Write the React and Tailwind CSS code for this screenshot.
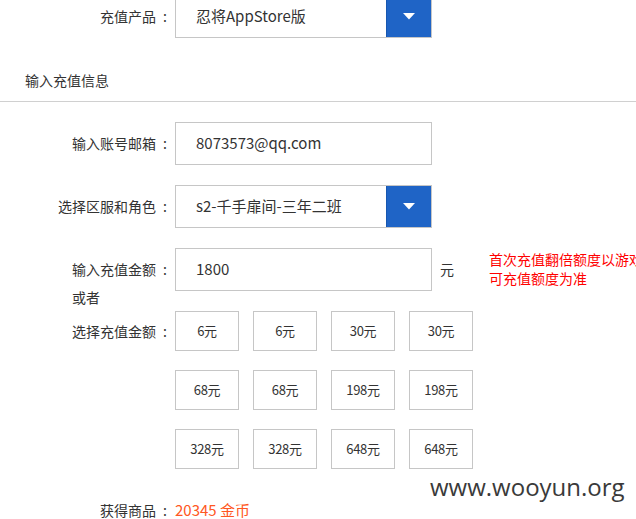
import React from "react";

const font = { fontFamily: '"Noto Sans CJK SC", "Noto Sans", sans-serif' };

const amounts = ["6元", "6元", "30元", "30元", "68元", "68元", "198元", "198元", "328元", "328元", "648元", "648元"];

const Colon = () => <span className="inline-block w-[14px] text-right pr-[3px]">:</span>;

const Label = ({ children, h = "h-[43px]" }) => (
  <div className={`w-[170px] ${h} flex items-center justify-end text-[14px] text-[#333] shrink-0`}>
    {children}
    <Colon />
  </div>
);

const Arrow = () => (
  <div className="w-[45px] h-full bg-[#1f64c6] border-l border-[#1857b0] flex items-center justify-center">
    <svg width="12" height="7" viewBox="0 0 12 7">
      <path d="M0 0 L12 0 L6 6.5 Z" fill="#fff" />
    </svg>
  </div>
);

const SelectBox = ({ value }) => (
  <div className="ml-[5px] w-[257px] h-[43px] border border-[#c6c6c6] flex items-stretch bg-white">
    <div className="flex-1 flex items-center pl-[20px] text-[15px] text-[#333]">{value}</div>
    <Arrow />
  </div>
);

const InputBox = ({ value }) => (
  <div className="ml-[5px] w-[257px] h-[43px] border border-[#c6c6c6] flex items-center pl-[20px] text-[15px] text-[#333] bg-white shrink-0">
    {value}
  </div>
);

export default function App() {
  return (
    <div className="relative w-[636px] h-[519px] overflow-hidden bg-white" style={font}>
      {/* 充值产品 */}
      <div className="flex -mt-[5px]">
        <Label>充值产品</Label>
        <SelectBox value="忍将AppStore版" />
      </div>

      {/* section title */}
      <div className="mt-[32px] pl-[25px] pb-[11px] border-b border-[#d0d0d0] text-[14px] leading-[20px] text-[#333]">
        输入充值信息
      </div>

      <div className="flex mt-[20px]">
        <Label>输入账号邮箱</Label>
        <InputBox value="8073573@qq.com" />
      </div>

      <div className="flex mt-[20px]">
        <Label>选择区服和角色</Label>
        <SelectBox value="s2-千手扉间-三年二班" />
      </div>

      {/* amount */}
      <div className="flex items-start mt-[20px]">
        <Label>输入充值金额</Label>
        <InputBox value="1800" />
        <div className="ml-[8px] h-[43px] flex items-center text-[14px] text-[#333]">元</div>
        <div className="ml-[35px] mt-[2px] text-[14px] leading-[19px] text-[#ff0000] whitespace-nowrap">
          首次充值翻倍额度以游戏
          <br />
          可充值额度为准
        </div>
      </div>
      <div className="pl-[72px] -mt-[4px] text-[14px] leading-[20px] text-[#333]">或者</div>

      {/* choose amount */}
      <div className="flex items-start mt-[4px]">
        <Label h="h-[40px]">选择充值金额</Label>
        <div className="ml-[5px] grid grid-cols-[repeat(4,64px)] gap-x-[14px] gap-y-[19px]">
          {amounts.map((a, i) => (
            <div
              key={i}
              className="h-[40px] border border-[#c6c6c6] flex items-center justify-center text-[13px] text-[#333] tracking-[-0.3px]"
            >
              {a}
            </div>
          ))}
        </div>
      </div>

      {/* result */}
      <div className="flex items-center mt-[31px] leading-[20px]">
        <div className="w-[170px] text-right text-[14px] text-[#333] shrink-0">
          获得商品
          <Colon />
        </div>
        <div className="ml-[5px] text-[15px] text-[#ff5722]">20345 金币</div>
      </div>

      {/* watermark */}
      <div
        className="absolute left-[430px] top-[472px] text-[24px] leading-[30px] text-[#3a3a3a]"
        style={{ fontFamily: '"Open Sans", sans-serif' }}
      >
        www.wooyun.org
      </div>
    </div>
  );
}
